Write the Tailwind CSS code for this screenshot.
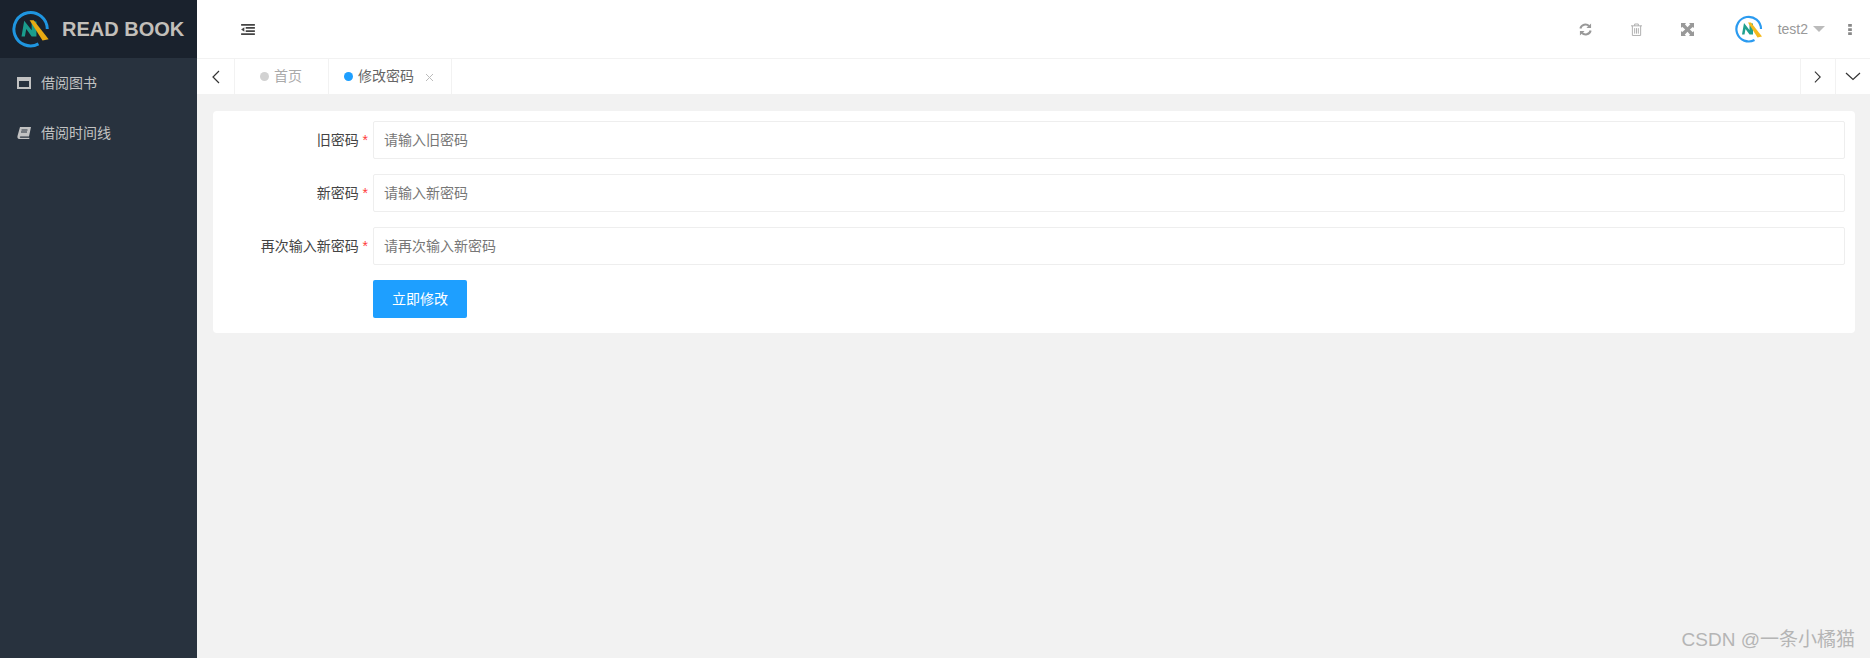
<!DOCTYPE html>
<html><head><meta charset="utf-8"><script src="https://cdn.jsdelivr.net/npm/@tailwindcss/browser@4"></script></head>
<body class="m-0">
<div class="relative flex h-[658px] w-[1870px] overflow-hidden bg-[#f2f2f2] font-['Liberation_Sans','Noto_Sans_CJK_SC',sans-serif] text-[14px]">
  <aside class="w-[197px] shrink-0 bg-[#28323e] text-[#c2c2c2]">
    <div class="flex h-[58px] items-center bg-[#1a222d]">
      <svg class="ml-[12px]" width="38" height="38" viewBox="0 0 28 28" fill="none"><path d="M19.500 25A12.300 12.300 0 1 1 26 14" stroke="#1f96e0" stroke-width="2.200"/><path d="M7 19.500L9 8l5.500 7V8.500h3.500V19.500h-3.500L10.500 14 9.500 19.500z" fill="#1a9c8c"/><path d="M13 7.500h3L27 21.500l-4.500 1z" fill="#e9ab12"/></svg>
      <span class="ml-[12px] text-[20px] font-bold leading-none text-[#c2bfba]">READ BOOK</span>
    </div>
    <nav>
      <div class="flex h-[50px] items-center pl-[17px]">
        <svg width="14" height="12" viewBox="0 0 14 12"><path fill="#c2c2c2" fill-rule="evenodd" d="M0 0h14v12H0zM2 4v6h10V4z"/></svg>
        <span class="ml-[10px]">借阅图书</span>
      </div>
      <div class="flex h-[50px] items-center pl-[17px]">
        <svg width="14" height="12" viewBox="0 0 14 12"><path fill="#c2c2c2" d="M3 0h11l-2 9.500H3.500c-1 0-1 1.300 0 1.300H12.500l-.3 1.200H2.500C.5 12 .2 10.500.5 9z"/><path stroke="#28323e" d="M4.500 3h6M4 5h6"/></svg>
        <span class="ml-[10px]">借阅时间线</span>
      </div>
    </nav>
  </aside>
  <main class="flex min-w-0 flex-1 flex-col">
    <header class="flex h-[58px] items-center bg-white">
      <svg class="ml-[44px]" width="14" height="11" viewBox="0 0 15 12" fill="#444"><path d="M0 0h15v2H0zM5 3.300h10v1.800H5zM5 6.800h10v1.800H5zM0 10h15v2H0zM3.500 3.500v5L0 6z"/></svg>
      <div class="ml-auto flex items-center">
        <svg width="13" height="13" viewBox="0 0 14 14" fill="none" stroke="#999" stroke-width="2.200"><path d="M1.500 6A5.500 5.500 0 0 1 11 3.500M12.500 8A5.500 5.500 0 0 1 3 10.500"/><path fill="#999" stroke="none" d="M13 0.500v5H8zM1 13.500v-5h5z"/></svg>
        <svg class="ml-[39px]" width="11" height="13" viewBox="0 0 12 14" fill="none" stroke="#aaa"><path d="M0 3h12M4 3V1h4v2M1.500 3v10.500h9V3M4 5.500v6M6 5.500v6M8 5.500v6"/></svg>
        <svg class="ml-[39px]" width="13" height="13" viewBox="0 0 14 14" fill="#999"><path d="M0 0h5.500L4.200 1.300 7 4.500 10 1.300 8.500 0H14v5.500L12.700 4.200 9.500 7l3.200 3 1.300-1.500V14H8.500l1.300-1.300L7 9.500 4 12.700 5.500 14H0V8.500L1.300 9.800 4.500 7 1.300 4 0 5.500z"/></svg>
        <svg class="ml-[41px]" width="28" height="28" viewBox="0 0 28 28" fill="none"><path d="M19.500 25A12.300 12.300 0 1 1 26 14" stroke="#2b9bf0" stroke-width="2.200"/><path d="M7 19.500L9 8l5.500 7V8.500h3.500V19.500h-3.500L10.500 14 9.500 19.500z" fill="#1fa08e"/><path d="M13 7.500h3L27 21.500l-4.500 1z" fill="#f5b91c"/></svg>
        <span class="ml-[15px] text-[#999]">test2</span>
        <span class="ml-[5px] h-0 w-0 border-x-[6px] border-t-[6px] border-x-transparent border-t-[#bbb]"></span>
        <svg class="ml-[23px] mr-[18px]" width="4" height="11" viewBox="0 0 4 12" fill="#888"><path d="M0 0h4v3H0zM0 4.500h4v3H0zM0 9h4v3H0z"/></svg>
      </div>
    </header>
    <div class="flex h-[36px] items-stretch border-t border-[#f2f2f2] bg-white text-[14px]">
      <div class="flex w-[38px] items-center justify-center border-r border-[#f2f2f2]"><svg width="9" height="14" viewBox="0 0 9 14" fill="none" stroke="#333" stroke-width="1.200"><path d="M8 1L2 7l6 6"/></svg></div>
      <div class="flex w-[94px] items-center border-r border-[#f2f2f2] pl-[25px] text-[#aaa]"><span class="mr-[5px] h-[9px] w-[9px] rounded-full bg-[#d2d2d2]"></span>首页</div>
      <div class="flex w-[123px] items-center border-r border-[#f2f2f2] pl-[15px] text-[#666]"><span class="mr-[5px] h-[9px] w-[9px] rounded-full bg-[#1e9fff]"></span>修改密码<svg class="ml-[11px] mt-[2px]" width="9" height="9" viewBox="0 0 9 9" stroke="#bbb"><path d="M1 1l7 7M8 1L1 8"/></svg></div>
      <div class="ml-auto flex w-[35px] items-center justify-center border-l border-[#f2f2f2]"><svg width="8" height="14" viewBox="0 0 9 14" fill="none" stroke="#333" stroke-width="1.200"><path d="M1 1l6 6-6 6"/></svg></div>
      <div class="flex w-[35px] items-center justify-center border-l border-[#f2f2f2]"><svg width="16" height="9" viewBox="0 0 16 9" fill="none" stroke="#333" stroke-width="1.200"><path d="M1 1l7 6.500L15 1"/></svg></div>
    </div>
    <section class="ml-[16px] mt-[17px] flex w-[1642px] flex-col gap-[15px] rounded-[4px] bg-white pb-[15px] pr-[10px] pt-[10px]">
      <div class="flex h-[38px] items-center">
        <label class="w-[160px] shrink-0 pr-[5px] text-right text-[#444]">旧密码 <span class="text-[#ff3b3b]">*</span></label>
        <input class="h-[38px] flex-1 rounded-[2px] border border-[#eee] pl-[10px] outline-none placeholder:text-[#777]" placeholder="请输入旧密码">
      </div>
      <div class="flex h-[38px] items-center">
        <label class="w-[160px] shrink-0 pr-[5px] text-right text-[#444]">新密码 <span class="text-[#ff3b3b]">*</span></label>
        <input class="h-[38px] flex-1 rounded-[2px] border border-[#eee] pl-[10px] outline-none placeholder:text-[#777]" placeholder="请输入新密码">
      </div>
      <div class="flex h-[38px] items-center">
        <label class="w-[160px] shrink-0 pr-[5px] text-right text-[#444]">再次输入新密码 <span class="text-[#ff3b3b]">*</span></label>
        <input class="h-[38px] flex-1 rounded-[2px] border border-[#eee] pl-[10px] outline-none placeholder:text-[#777]" placeholder="请再次输入新密码">
      </div>
      <div class="pl-[160px]"><button class="h-[38px] w-[94px] rounded-[2px] bg-[#1e9fff] text-white">立即修改</button></div>
    </section>
  </main>
  <div class="absolute bottom-[9px] right-[15px] text-[19px] leading-none text-[#b5b5b5]">CSDN @一条小橘猫</div>
</div>
</body></html>
